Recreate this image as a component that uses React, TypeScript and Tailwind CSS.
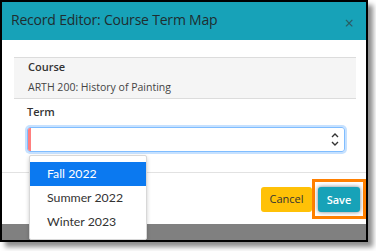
export default function App() {
  return (
    <div className="w-[376px] h-[251px] bg-white relative" style={{ fontFamily: "'Open Sans', sans-serif" }}>
      <div className="w-[368px] h-[242px] border-2 border-black shadow-[5px_5px_5px_rgba(0,0,0,0.45)] flex flex-col relative overflow-hidden">
        {/* header */}
        <div className="h-[38px] shrink-0 bg-[#17a2b8] flex items-center justify-between pl-[9px] pr-[10px] pb-[3px]">
          <span className="text-[14px] text-[#1f2d30] tracking-[-0.2px]">Record Editor: Course Term Map</span>
          <span className="text-[16px] leading-none text-[#2b5960] mt-[6px] mr-[2px]">×</span>
        </div>

        {/* body */}
        <div className="bg-white pt-[17px] pl-[12px] pr-[10px]">
          <div className="bg-[#f5f5f5] border-y border-[#dcdcdc] h-[42px] pl-[14px] text-[#333]">
            <div className="text-[11px] font-semibold leading-[18px]">Course</div>
            <div className="text-[10.5px] leading-[14px] mt-[4px] text-[#444]">ARTH 200: History of Painting</div>
          </div>
          <div className="pl-[13px] pr-[11px] pt-[4px] pb-[20px]">
            <div className="text-[11px] font-semibold text-[#333] leading-[18px] mb-[6px]">Term</div>
            <div className="h-[25px] rounded-[3px] border border-[#80bdff] shadow-[0_0_0_2px_rgba(128,189,255,0.45)] flex items-stretch overflow-hidden">
              <div className="w-[3px] bg-[#ff7f7f]" />
              <div className="flex-1" />
              <div className="flex flex-col items-center justify-center pr-[5px] text-[#333]">
                <svg width="8" height="6" viewBox="0 0 8 6"><path d="M1 5 L4 2 L7 5" fill="none" stroke="#333" strokeWidth="1.4" /></svg>
                <svg width="8" height="6" viewBox="0 0 8 6" className="mt-[3px]"><path d="M1 1 L4 4 L7 1" fill="none" stroke="#333" strokeWidth="1.4" /></svg>
              </div>
            </div>
          </div>
        </div>

        {/* footer */}
        <div className="bg-white border-t border-[#e2e2e2] h-[52px] flex items-center justify-end">
          <button className="w-[51px] h-[25px] rounded-[3px] bg-[#ffc107] text-[11px] text-[#333] mt-[1px]">Cancel</button>
          <div className="border-[3px] border-[#ff8000] px-[3px] py-[4px] mt-[1px]">
            <button className="w-[42px] h-[25px] rounded-[3px] bg-[#17a2b8] text-[11px] text-white font-semibold shadow-[0_0_4px_rgba(0,0,0,0.5)]">Save</button>
          </div>
        </div>

        {/* backdrop */}
        <div className="flex-1 bg-[#808080]" />

        {/* dropdown */}
        <div className="absolute left-[27px] top-[153px] w-[118px] bg-white border border-[#d8d8d8] rounded-[2px] shadow-[0_2px_4px_rgba(0,0,0,0.2)] pt-[6px] pb-[5px] text-[12.3px] text-[#333]" style={{ fontFamily: "Lato, sans-serif" }}>
          <div className="h-[24px] bg-[#0b79f0] text-white flex items-center pl-[17px]">Fall 2022</div>
          <div className="h-[24px] flex items-center pl-[17px]">Summer 2022</div>
          <div className="h-[24px] flex items-center pl-[17px]">Winter 2023</div>
        </div>
      </div>
    </div>
  );
}
